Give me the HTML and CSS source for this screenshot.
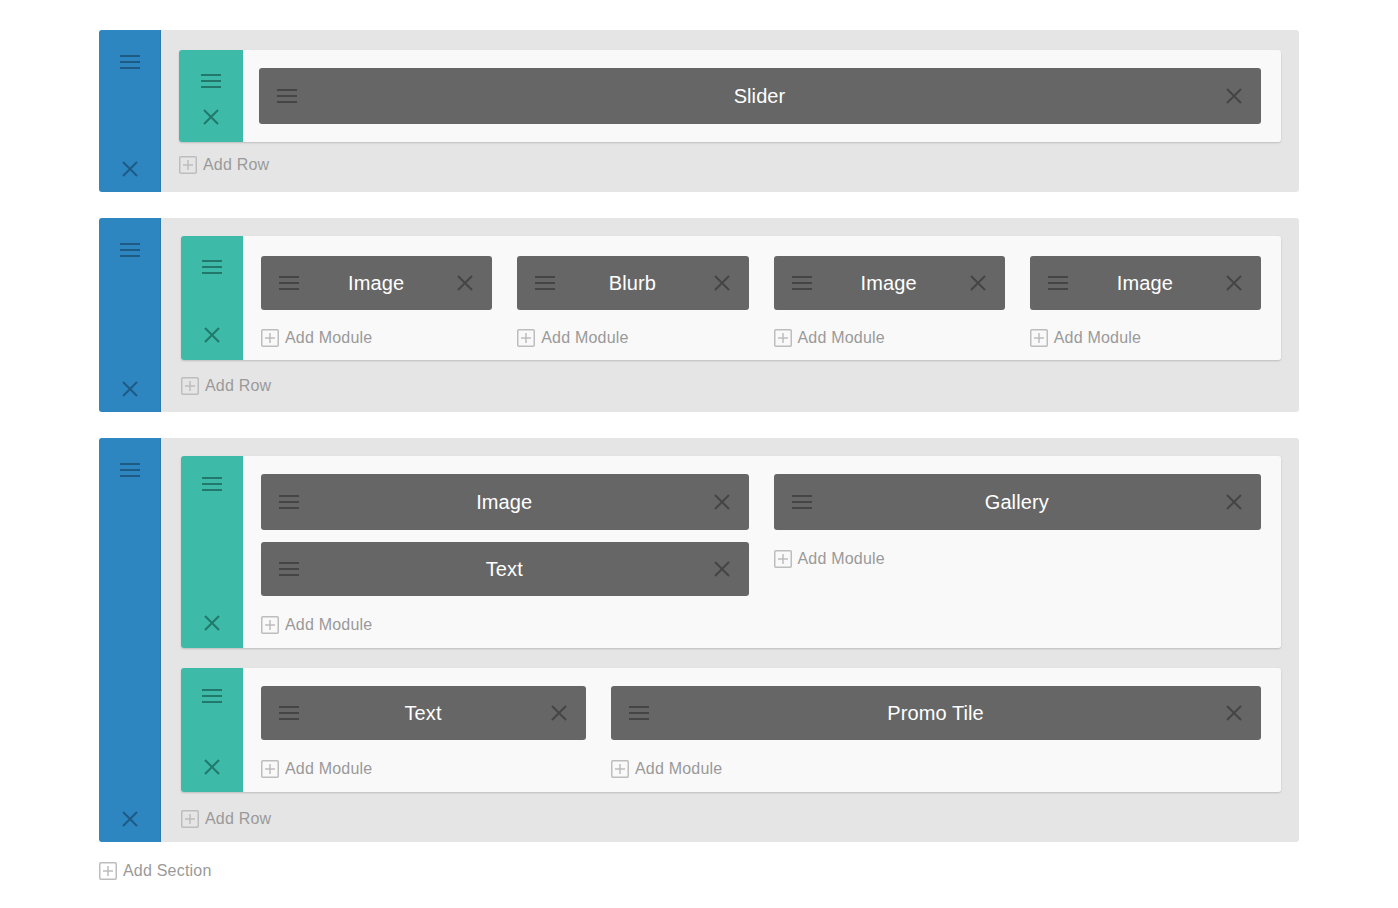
FILE: index.html
```html
<!DOCTYPE html>
<html>
<head>
<meta charset="utf-8">
<link rel="stylesheet" href="styles.css">
</head>
<body>
<svg width="0" height="0" class="defs">
  <defs>
    <g id="ham"><path d="M0 1H20M0 7H20M0 13H20" stroke-width="2" fill="none"/></g>
    <g id="x"><path d="M1 1L15 15M15 1L1 15" stroke-width="2" fill="none"/></g>
    <g id="plus"><rect x="0.75" y="0.75" width="16.5" height="16.5" rx="1" fill="none" stroke-width="1.5"/><path d="M9 4V14M4 9H14" stroke-width="1.5" fill="none"/></g>
  </defs>
</svg>
<div class="page">

  <section class="section section--first">
    <div class="sec-handle">
      <svg class="ham" viewBox="0 0 20 14"><use href="#ham"/></svg>
      <svg class="xi" viewBox="0 0 16 16"><use href="#x"/></svg>
    </div>
    <div class="sec-body">
      <div class="row">
        <div class="row-handle">
          <svg class="ham" viewBox="0 0 20 14"><use href="#ham"/></svg>
          <svg class="xi" viewBox="0 0 16 16"><use href="#x"/></svg>
        </div>
        <div class="row-body row-body--full">
          <div class="cols cols-1">
            <div class="col">
              <div class="module">
                <svg class="ham" viewBox="0 0 20 14"><use href="#ham"/></svg>
                <span class="mod-title">Slider</span>
                <svg class="xi" viewBox="0 0 16 16"><use href="#x"/></svg>
              </div>
            </div>
          </div>
        </div>
      </div>
      <div class="add add-row add-row--raised"><svg class="plus" viewBox="0 0 18 18"><use href="#plus"/></svg><span>Add Row</span></div>
    </div>
  </section>

  <section class="section section--second">
    <div class="sec-handle">
      <svg class="ham" viewBox="0 0 20 14"><use href="#ham"/></svg>
      <svg class="xi" viewBox="0 0 16 16"><use href="#x"/></svg>
    </div>
    <div class="sec-body">
      <div class="row">
        <div class="row-handle">
          <svg class="ham" viewBox="0 0 20 14"><use href="#ham"/></svg>
          <svg class="xi" viewBox="0 0 16 16"><use href="#x"/></svg>
        </div>
        <div class="row-body row-body--roomy">
          <div class="cols cols-4">
            <div class="col">
              <div class="module module--short"><svg class="ham" viewBox="0 0 20 14"><use href="#ham"/></svg><span class="mod-title">Image</span><svg class="xi" viewBox="0 0 16 16"><use href="#x"/></svg></div>
              <div class="add add-module add-module--short"><svg class="plus" viewBox="0 0 18 18"><use href="#plus"/></svg><span>Add Module</span></div>
            </div>
            <div class="col">
              <div class="module module--short"><svg class="ham" viewBox="0 0 20 14"><use href="#ham"/></svg><span class="mod-title">Blurb</span><svg class="xi" viewBox="0 0 16 16"><use href="#x"/></svg></div>
              <div class="add add-module add-module--short"><svg class="plus" viewBox="0 0 18 18"><use href="#plus"/></svg><span>Add Module</span></div>
            </div>
            <div class="col">
              <div class="module module--short"><svg class="ham" viewBox="0 0 20 14"><use href="#ham"/></svg><span class="mod-title">Image</span><svg class="xi" viewBox="0 0 16 16"><use href="#x"/></svg></div>
              <div class="add add-module add-module--short"><svg class="plus" viewBox="0 0 18 18"><use href="#plus"/></svg><span>Add Module</span></div>
            </div>
            <div class="col">
              <div class="module module--short"><svg class="ham" viewBox="0 0 20 14"><use href="#ham"/></svg><span class="mod-title">Image</span><svg class="xi" viewBox="0 0 16 16"><use href="#x"/></svg></div>
              <div class="add add-module add-module--short"><svg class="plus" viewBox="0 0 18 18"><use href="#plus"/></svg><span>Add Module</span></div>
            </div>
          </div>
        </div>
      </div>
      <div class="add add-row add-row--tall"><svg class="plus" viewBox="0 0 18 18"><use href="#plus"/></svg><span>Add Row</span></div>
    </div>
  </section>

  <section class="section">
    <div class="sec-handle">
      <svg class="ham" viewBox="0 0 20 14"><use href="#ham"/></svg>
      <svg class="xi" viewBox="0 0 16 16"><use href="#x"/></svg>
    </div>
    <div class="sec-body">
      <div class="row">
        <div class="row-handle row-handle--high">
          <svg class="ham" viewBox="0 0 20 14"><use href="#ham"/></svg>
          <svg class="xi" viewBox="0 0 16 16"><use href="#x"/></svg>
        </div>
        <div class="row-body">
          <div class="cols cols-2">
            <div class="col">
              <div class="module"><svg class="ham" viewBox="0 0 20 14"><use href="#ham"/></svg><span class="mod-title">Image</span><svg class="xi" viewBox="0 0 16 16"><use href="#x"/></svg></div>
              <div class="module module--short"><svg class="ham" viewBox="0 0 20 14"><use href="#ham"/></svg><span class="mod-title">Text</span><svg class="xi" viewBox="0 0 16 16"><use href="#x"/></svg></div>
              <div class="add add-module"><svg class="plus" viewBox="0 0 18 18"><use href="#plus"/></svg><span>Add Module</span></div>
            </div>
            <div class="col">
              <div class="module"><svg class="ham" viewBox="0 0 20 14"><use href="#ham"/></svg><span class="mod-title">Gallery</span><svg class="xi" viewBox="0 0 16 16"><use href="#x"/></svg></div>
              <div class="add add-module"><svg class="plus" viewBox="0 0 18 18"><use href="#plus"/></svg><span>Add Module</span></div>
            </div>
          </div>
        </div>
      </div>
      <div class="row">
        <div class="row-handle row-handle--high">
          <svg class="ham" viewBox="0 0 20 14"><use href="#ham"/></svg>
          <svg class="xi" viewBox="0 0 16 16"><use href="#x"/></svg>
        </div>
        <div class="row-body">
          <div class="cols cols-1-2">
            <div class="col">
              <div class="module module--short"><svg class="ham" viewBox="0 0 20 14"><use href="#ham"/></svg><span class="mod-title">Text</span><svg class="xi" viewBox="0 0 16 16"><use href="#x"/></svg></div>
              <div class="add add-module"><svg class="plus" viewBox="0 0 18 18"><use href="#plus"/></svg><span>Add Module</span></div>
            </div>
            <div class="col">
              <div class="module module--short"><svg class="ham" viewBox="0 0 20 14"><use href="#ham"/></svg><span class="mod-title">Promo Tile</span><svg class="xi" viewBox="0 0 16 16"><use href="#x"/></svg></div>
              <div class="add add-module"><svg class="plus" viewBox="0 0 18 18"><use href="#plus"/></svg><span>Add Module</span></div>
            </div>
          </div>
        </div>
      </div>
      <div class="add add-row add-row--low"><svg class="plus" viewBox="0 0 18 18"><use href="#plus"/></svg><span>Add Row</span></div>
    </div>
  </section>

  <div class="add add-section"><svg class="plus" viewBox="0 0 18 18"><use href="#plus"/></svg><span>Add Section</span></div>
</div>
</body>
</html>
```

FILE: styles.css
```css
html, body {
  margin: 0;
  padding: 0;
  background: #ffffff;
}

body {
  font-family: "Helvetica Neue", "Liberation Sans", Arial, sans-serif;
}

.defs {
  position: absolute;
  width: 0;
  height: 0;
}

.page {
  width: 1200px;
  margin-left: 99px;
  padding-top: 30px;
  display: flex;
  flex-direction: column;
  gap: 26px;
}

.section {
  display: flex;
  background: #e5e5e5;
  border-radius: 3px;
}

.sec-handle {
  width: 62px;
  flex: none;
  background: #2e86c1;
  border-right: 1px solid #2a7ab0;
  border-radius: 3px 0 0 3px;
  display: flex;
  flex-direction: column;
  align-items: center;
  justify-content: space-between;
  padding: 25px 0 15px;
  box-sizing: border-box;
  stroke: #1d5b85;
}

.sec-body {
  flex: 1;
  min-width: 0;
  padding: 18px 18px 0 20px;
  display: flex;
  flex-direction: column;
  gap: 20px;
}

.section--first .sec-body {
  padding-top: 20px;
  padding-left: 18px;
}

.ham {
  width: 20px;
  height: 14px;
  display: block;
}

.xi {
  width: 16px;
  height: 16px;
  display: block;
}

.row {
  display: flex;
  border-radius: 3px;
  box-shadow: 0 1px 2px rgba(0, 0, 0, 0.18);
}

.row-handle {
  width: 62px;
  flex: none;
  background: #3dbaa8;
  border-radius: 3px 0 0 3px;
  display: flex;
  flex-direction: column;
  align-items: center;
  justify-content: space-between;
  padding: 24px 0 17px;
  box-sizing: border-box;
  stroke: #22786b;
}

.section--first .row-handle {
  width: 64px;
}

.row-handle--high {
  padding-top: 21px;
}

.row-body {
  flex: 1;
  min-width: 0;
  background: #f9f9f9;
  border-radius: 0 3px 3px 0;
  padding: 18px 20px 0 18px;
}

.section--first .row-body {
  padding-left: 16px;
}

.row-body--full {
  padding-bottom: 18px;
}

.row-body--roomy {
  padding-top: 20px;
}

.cols {
  display: grid;
  column-gap: 25px;
}

.cols-1 { grid-template-columns: 1fr; }
.cols-2 { grid-template-columns: 1fr 1fr; }
.cols-4 { grid-template-columns: 1fr 1fr 1fr 1fr; }
.cols-1-2 { grid-template-columns: 1fr 2fr; }

.col {
  display: flex;
  flex-direction: column;
  gap: 12px;
  min-width: 0;
}

.module {
  height: 56px;
  background: #666666;
  border-radius: 3px;
  display: grid;
  grid-template-columns: 24px 1fr 24px;
  align-items: center;
  padding: 0 19px 0 18px;
  stroke: #454545;
}

.module--short {
  height: 54px;
}

.module .xi {
  justify-self: end;
}

.mod-title {
  color: #ffffff;
  font-size: 20px;
  text-align: center;
  letter-spacing: 0.1px;
}

.add {
  display: flex;
  align-items: center;
  gap: 6px;
  color: #9a9a9a;
  font-size: 16px;
  stroke: #bdbdbd;
  letter-spacing: 0.2px;
}

.plus {
  width: 18px;
  height: 18px;
  display: block;
  flex: none;
}

.add-module {
  height: 52px;
  box-sizing: border-box;
  margin-top: -12px;
  padding-top: 20px;
  align-items: flex-start;
}

.add-module--short {
  height: 50px;
  padding-top: 19px;
}

.add-row {
  height: 50px;
  box-sizing: border-box;
  margin-top: -20px;
}

.add-row--raised {
  padding-bottom: 5px;
}

.add-row--tall {
  height: 52px;
}

.add-row--low {
  padding-top: 4px;
}

.add-section {
  margin-top: -17px;
  height: 40px;
}
```
